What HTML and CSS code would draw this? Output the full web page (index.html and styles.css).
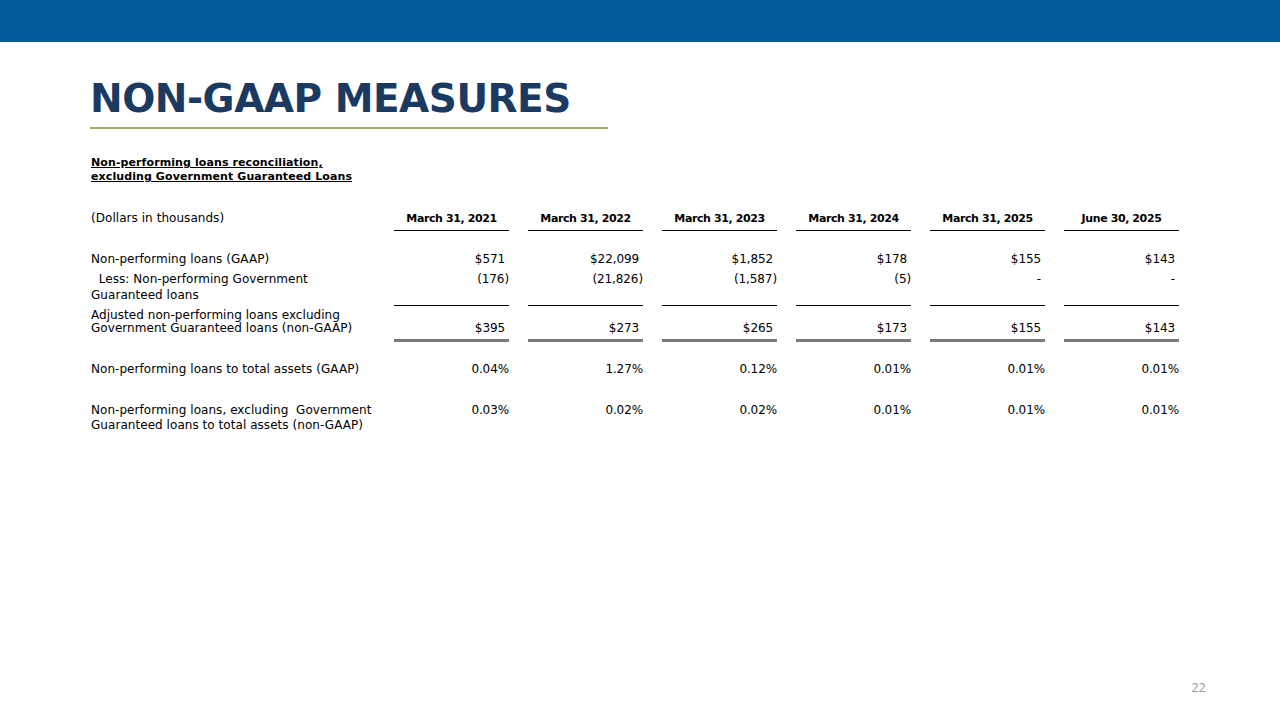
FILE: index.html
```html
<!DOCTYPE html>
<html>
<head>
<meta charset="utf-8">
<link rel="stylesheet" href="styles.css">
</head>
<body>
<div class="slide">
  <div class="topbar"></div>
  <div class="content">
    <h1 class="title">NON-GAAP MEASURES</h1>
    <div class="rule"></div>
    <div class="subhead">Non-performing loans reconciliation,<br>excluding Government Guaranteed Loans</div>
    <div class="grid">
      <div class="cell label hdr-row">(Dollars in thousands)</div>
      <div class="cell hdr">March 31, 2021</div>
      <div class="cell hdr">March 31, 2022</div>
      <div class="cell hdr">March 31, 2023</div>
      <div class="cell hdr">March 31, 2024</div>
      <div class="cell hdr">March 31, 2025</div>
      <div class="cell hdr">June 30, 2025</div>

      <div class="cell label r1">Non-performing loans (GAAP)</div>
      <div class="cell num r1 dol">$571</div>
      <div class="cell num r1 dol">$22,099</div>
      <div class="cell num r1 dol">$1,852</div>
      <div class="cell num r1 dol">$178</div>
      <div class="cell num r1 dol">$155</div>
      <div class="cell num r1 dol">$143</div>

      <div class="cell label r2">&nbsp;&nbsp;Less: Non-performing Government<br>Guaranteed loans</div>
      <div class="cell num r2">(176)</div>
      <div class="cell num r2">(21,826)</div>
      <div class="cell num r2">(1,587)</div>
      <div class="cell num r2">(5)</div>
      <div class="cell num r2 dash">-</div>
      <div class="cell num r2 dash">-</div>

      <div class="cell label r3">Adjusted non-performing loans excluding<br>Government Guaranteed loans (non-GAAP)</div>
      <div class="cell num r3 tot dol">$395</div>
      <div class="cell num r3 tot dol">$273</div>
      <div class="cell num r3 tot dol">$265</div>
      <div class="cell num r3 tot dol">$173</div>
      <div class="cell num r3 tot dol">$155</div>
      <div class="cell num r3 tot dol">$143</div>

      <div class="cell label r4">Non-performing loans to total assets (GAAP)</div>
      <div class="cell num r4">0.04%</div>
      <div class="cell num r4">1.27%</div>
      <div class="cell num r4">0.12%</div>
      <div class="cell num r4">0.01%</div>
      <div class="cell num r4">0.01%</div>
      <div class="cell num r4">0.01%</div>

      <div class="cell label r5">Non-performing loans, excluding&nbsp; Government<br>Guaranteed loans to total assets (non-GAAP)</div>
      <div class="cell num r5">0.03%</div>
      <div class="cell num r5">0.02%</div>
      <div class="cell num r5">0.02%</div>
      <div class="cell num r5">0.01%</div>
      <div class="cell num r5">0.01%</div>
      <div class="cell num r5">0.01%</div>
    </div>
  </div>
  <div class="pagenum">22</div>
</div>
</body>
</html>
```

FILE: styles.css
```css
html, body {
  margin: 0;
  padding: 0;
  background: #ffffff;
}
.slide {
  width: 1280px;
  height: 720px;
  position: relative;
  overflow: hidden;
  font-family: "DejaVu Sans", "Open Sans", sans-serif;
  color: #000;
}
.topbar {
  height: 42px;
  background: #005a9a;
}
.content {
  padding-left: 90px;
}
.title {
  margin: 0;
  padding-top: 31px;
  height: 55px;
  font-family: "DejaVu Sans", sans-serif;
  font-weight: bold;
  font-size: 39px;
  line-height: 52px;
  color: #1a3a62;
  letter-spacing: -0.5px;
}
.rule {
  width: 518px;
  height: 2px;
  background: #a2ab6d;
  margin-top: -1px;
}
.subhead {
  margin-top: 27px;
  margin-left: 1px;
  font-size: 11px;
  line-height: 14px;
  font-weight: bold;
  text-decoration: underline;
  letter-spacing: 0.1px;
}
.grid {
  margin-top: 24px;
  margin-left: 1px;
  display: grid;
  grid-template-columns: 284px repeat(6, 115px);
  column-gap: 19px;
  font-size: 12px;
  letter-spacing: 0.05px;
}
.cell {
  line-height: 15px;
}
.label {
  white-space: nowrap;
}
.hdr-row {
  padding-top: 3px;
  height: 20px;
}
.hdr {
  text-align: center;
  font-weight: bold;
  font-size: 11px;
  letter-spacing: -0.4px;
  padding-top: 3px;
  height: 19px;
  border-bottom: 1px solid #000;
}
.num {
  text-align: right;
  letter-spacing: -0.1px;
}
.r1 {
  margin-top: 21px;
  height: 17px;
}
.r2 {
  line-height: 16px;
  padding-top: 2px;
  height: 34px;
}
.r3 {
  line-height: 13px;
  padding-top: 4px;
  height: 33px;
}
.r3.tot {
  border-top: 1px solid #000;
  border-bottom: 3px solid #7b7b7b;
  line-height: 15px;
  padding-top: 15px;
  height: 18px;
}
.r4 {
  margin-top: 20px;
  height: 41px;
}
.r5 {
  line-height: 15px;
}
.dol {
  padding-right: 4px;
}
.dash {
  padding-right: 4px;
}
.pagenum {
  position: absolute;
  right: 74px;
  top: 678px;
  font-size: 13px;
  color: #9a9a9a;
  font-family: "Open Sans", sans-serif;
}
```
